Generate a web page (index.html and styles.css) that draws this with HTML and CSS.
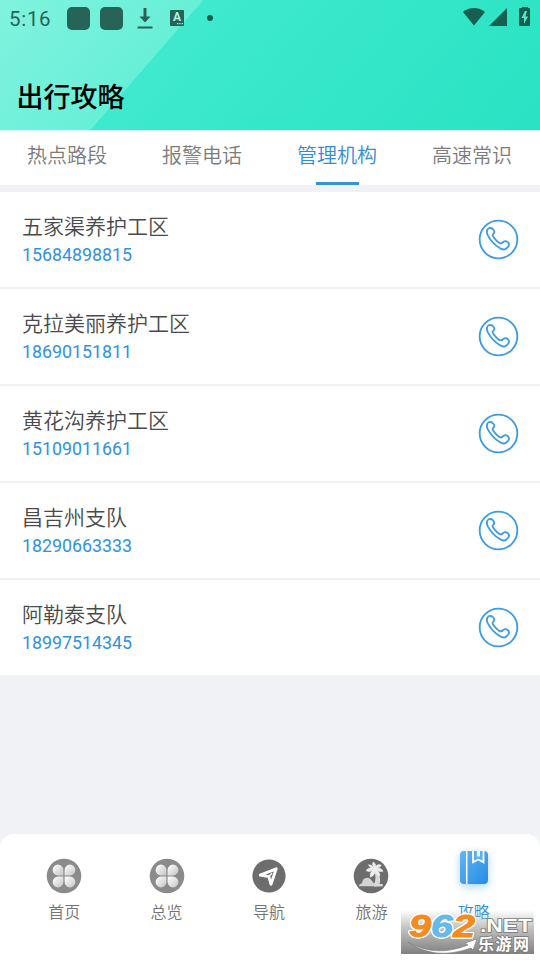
FILE: index.html
```html
<!DOCTYPE html>
<html lang="zh-CN">
<head>
<meta charset="utf-8">
<title>出行攻略</title>
<link rel="stylesheet" href="styles.css">
</head>
<body>
<svg width="0" height="0" class="defs">
  <defs>
    <linearGradient id="petal" x1="0" y1="0" x2="1" y2="1"><stop offset="0" stop-color="#fff"/><stop offset=".5" stop-color="#e2e2e2"/><stop offset="1" stop-color="#c4c4c4"/></linearGradient>
    <linearGradient id="book" x1="0" y1="0" x2="1" y2="1"><stop offset="0" stop-color="#62b5f5"/><stop offset="1" stop-color="#258ce4"/></linearGradient>
    <symbol id="phone" viewBox="0 0 123 123">
      <circle cx="61.5" cy="61.5" r="56.5" fill="none" stroke="#3d9be0" stroke-width="5.5"/>
      <path d="M27 36C27 30 33 26 38 27C44 28 49 34 49 39C49 44 42 45 44 50C48 58 59 70 67 73C72 75 74 68 79 67C85 65 92 70 93 76C94 81 88 86 84 89C79 93 71 91 65 87C51 79 37 63 30 50C27 44 26 40 27 36Z" fill="none" stroke="#3d9be0" stroke-width="5.5" stroke-linejoin="round"/>
    </symbol>
    <symbol id="clover" viewBox="0 0 36 36">
      <circle cx="18" cy="18" r="17.3" fill="#8b8b8b"/>
      <g fill="url(#petal)">
        <path d="M17.4 17.4H12.2A5.4 5.4 0 1 1 17.4 12Z"/>
        <path d="M18.6 17.4V12A5.4 5.4 0 1 1 24 17.4Z"/>
        <path d="M17.4 18.6V24A5.4 5.4 0 1 1 12 18.6Z"/>
        <path d="M18.6 18.6H24A5.4 5.4 0 1 1 18.6 24Z"/>
      </g>
    </symbol>
  </defs>
</svg>
<div class="app">
  <header class="header">
    <div class="status">
      <span class="clock">5:16</span>
      <i class="block"></i><i class="block second"></i>
      <svg class="download" width="16" height="22" viewBox="0 0 16 22"><path d="M6.5 0H9.5V8.5H13.5L8 14.5L2.5 8.5H6.5ZM.5 18.5H15.5V20.5H.5Z" fill="#286357"/></svg>
      <span class="letter">A<svg width="7" height="2" viewBox="0 0 7 2"><path d="M0 0h1.3v1.3H0zM2.3 0h1.3v1.3H2.3zM4.6 0h1.3v1.3H4.6z" fill="#a8f4e4"/></svg></span>
      <i class="dot"></i>
      <svg class="signals" width="69" height="22" viewBox="0 0 69 22"><g fill="#16604f"><path d="M0 5C6-.2 16-.2 22 5L11 18.5Z"/><path d="M26 19L44 1V19Z"/><path d="M59 1V0H65V1H66Q67 1 67 2V18Q67 19 66 19H57Q56 19 56 18V2Q56 1 57 1Z"/></g><path d="M62 4L58.5 11H61V17L65 9.5H62.3L64 4Z" fill="#5ce8cc"/></svg>
    </div>
    <h1 class="title">出行攻略</h1>
  </header>
  <nav class="tabs">
    <span class="tab">热点路段</span><span class="tab">报警电话</span><span class="tab active">管理机构</span><span class="tab">高速常识</span>
  </nav>
  <main class="list">
    <div class="row"><div><div class="name">五家渠养护工区</div><div class="number">15684898815</div></div><svg class="call"><use href="#phone"/></svg></div>
    <div class="row"><div><div class="name">克拉美丽养护工区</div><div class="number">18690151811</div></div><svg class="call"><use href="#phone"/></svg></div>
    <div class="row"><div><div class="name">黄花沟养护工区</div><div class="number">15109011661</div></div><svg class="call"><use href="#phone"/></svg></div>
    <div class="row"><div><div class="name">昌吉州支队</div><div class="number">18290663333</div></div><svg class="call"><use href="#phone"/></svg></div>
    <div class="row"><div><div class="name">阿勒泰支队</div><div class="number">18997514345</div></div><svg class="call"><use href="#phone"/></svg></div>
  </main>
  <footer class="bottom">
    <div class="item"><svg class="icon"><use href="#clover"/></svg><span>首页</span></div>
    <div class="item"><svg class="icon"><use href="#clover"/></svg><span>总览</span></div>
    <div class="item"><svg class="icon" viewBox="0 0 36 36"><circle cx="18" cy="18" r="16.6" fill="#6d6d6d"/><path d="M9.2 17.1L25.2 10.8L20 26.2L17.8 18.6Z" fill="none" stroke="#fff" stroke-width="2.9" stroke-linejoin="round"/><path d="M17.8 18.6L21 15.3" stroke="#fff" stroke-width="1.5"/></svg><span>导航</span></div>
    <div class="item"><svg class="icon" viewBox="0 0 36 36"><circle cx="18" cy="18" r="17.3" fill="#6d6d6d"/><path d="M6 28.3Q6 25.8 9 25.3Q9.5 20 14 19.8Q17.5 20 19 23L21 25.5H24V28.3Z" fill="#d3d3d3"/><path d="M22 11Q29 18 26.6 26H29.7V28.4H21V26Q24.2 19 20.5 12Z" fill="#d8d8d8"/><path d="M21 10Q18.5 6.2 20.3 4Q23 5.5 22.7 8.2Q25.5 5.4 28.2 7.3Q27.2 9.4 24.5 10.2Q29 9.8 30 13.2Q26.7 14.3 24 12.5Q27.6 15.2 26.7 18Q23.5 17 22.2 13.2Q21.7 17.5 17.4 19.3Q16.2 15.7 19.5 12.3Q16.2 14.7 13 12.6Q14.7 9.4 19 10.2Q15.7 8.8 15.6 6.7Q18.6 6.3 21 10Z" fill="#eee" stroke="#eee" stroke-width=".6"/></svg><span>旅游</span></div>
    <div class="item current"><svg class="book" width="40" height="44" viewBox="0 0 40 44"><rect x="6" y="4" width="28" height="33" rx="4" fill="url(#book)"/><path d="M12.7 4V37" stroke="#fff" stroke-width="1.5"/><path d="M19 4V15.2L24.2 12.4L29.5 15.2V4Z" fill="#5aaef2"/><path d="M19 4V15.2L24.2 12.4L29.5 15.2V4" fill="none" stroke="#fff" stroke-width="1.8"/><path d="M22.8 3.5V9.5H26V3.5Z" fill="#e7f5ff"/></svg><span>攻略</span></div>
  </footer>
  <div class="watermark">
    <svg width="133" height="44" viewBox="0 0 133 44">
      <path d="M7 32Q34 48 67 35L64 33L76 29L72 40L70 38Q34 51 7 32Z" fill="#fff" stroke="#777" stroke-width=".6"/>
      <g class="digits"><text x="8" y="27" textLength="66" lengthAdjust="spacingAndGlyphs"><tspan fill="#f58a20" stroke="#f58a20">9</tspan><tspan fill="#65b9ed" stroke="#65b9ed">6</tspan><tspan fill="#f58a20" stroke="#f58a20">2</tspan></text></g>
      <text class="net" x="79" y="22" textLength="52" lengthAdjust="spacingAndGlyphs">.NET</text>
      <text class="site" x="77" y="39.5" textLength="51">乐游网</text>
    </svg>
  </div>
</div>
</body>
</html>
```
FILE: styles.css
```css
* { box-sizing: border-box; }
body { margin: 0; background: #fff; font-family: Roboto, "Noto Sans CJK SC", sans-serif; }
.defs { position: absolute; }
.app { position: relative; width: 540px; height: 960px; display: flex; flex-direction: column; background: #f0f2f6; overflow: hidden; }
.header { height: 130px; flex: none; background: linear-gradient(131deg, #80f3de 0, #68efd8 153px, #3fe9cd 154px, #2de4c5 420px, #2be3c4 100%); }
.status { height: 36px; display: flex; align-items: center; padding-left: 9px; color: #286357; }
.clock { width: 58px; font-size: 20.5px; line-height: 36px; letter-spacing: .7px; padding-top: 1px; }
.block { width: 23px; height: 23px; border-radius: 5px; background: #286357; }
.second { margin-left: 10px; }
.download { margin-left: 14px; position: relative; top: 1px; }
.letter { position: relative; width: 14px; height: 16px; margin-left: 17px; border-radius: 1px; background: #286357; color: #a8f4e4; font: bold 12px/15px Roboto, sans-serif; text-align: center; }
.letter svg { position: absolute; right: 0; bottom: 1px; }
.dot { width: 6px; height: 6px; margin-left: 23px; border-radius: 50%; background: #16604f; }
.signals { margin-left: auto; margin-right: 8px; }
.title { margin: 42px 0 0 16.5px; font-size: 27px; font-weight: 500; line-height: 40px; color: #000; }
.tabs { height: 55px; flex: none; display: flex; background: #fff; border-top: 1px solid #d8fcfb; margin-bottom: 7px; }
.tab { flex: 1; display: flex; flex-direction: column; align-items: center; justify-content: space-between; padding-top: 9px; font-family: "Noto Sans CJK SC", sans-serif; font-size: 20px; font-weight: 350; line-height: 30px; color: #7c7c7c; text-indent: -1px; }
.active { color: #2d8edb; }
.active::after { content: ""; width: 43px; height: 3px; background: #3592dc; }
.list { display: flex; flex-direction: column; gap: 2px; }
.row { height: 95px; display: flex; align-items: center; justify-content: space-between; padding: 0 21px 0 22px; background: #fff; }
.name { padding-bottom: 2px; font-family: "Noto Sans CJK SC", sans-serif; font-size: 21px; font-weight: 350; line-height: 29px; color: #4a4a4a; }
.number { font-size: 17.8px; line-height: 26px; color: #2f92df; }
.call { width: 41px; height: 41px; }
.bottom { height: 126px; margin-top: auto; flex: none; display: flex; padding: 0 15px 0 13px; background: #fff; border-radius: 14px 14px 0 0; }
.item { flex: 1; display: flex; flex-direction: column; align-items: center; padding-top: 24px; font-family: "Noto Sans CJK SC", sans-serif; font-size: 16px; font-weight: 350; line-height: 24px; color: #747474; }
.icon { width: 36px; height: 36px; margin-bottom: 5px; }
.current { padding-top: 13px; color: #2d8edb; }
.book { margin-bottom: 8px; filter: drop-shadow(0 3px 4px #72bdf199); }
.watermark { position: absolute; left: 401px; top: 910px; width: 133px; height: 44px; overflow: hidden; background: linear-gradient(#fff0, #bbbd 40%, #777e); }
.digits { font: italic bold 31px "Liberation Sans", sans-serif; stroke-width: 1px; filter: drop-shadow(1px 0 0 #fff) drop-shadow(-1px 0 0 #fff) drop-shadow(0 1px 0 #fff) drop-shadow(0 -1px 0 #fff); }
.net { font: bold 19px "Liberation Sans", sans-serif; fill: #fff; stroke: #777; stroke-width: 1.5px; paint-order: stroke; }
.site { font: bold 16px "Noto Sans CJK SC", sans-serif; fill: #fff; stroke: #777; stroke-width: 1.5px; paint-order: stroke; }
```
